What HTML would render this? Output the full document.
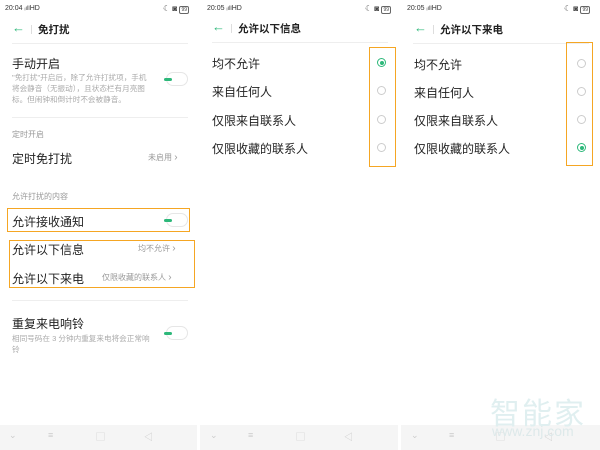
<!DOCTYPE html>
<html><head><meta charset="utf-8"><style>
*{margin:0;padding:0;box-sizing:border-box}
body{width:600px;height:450px;background:#fff;position:relative;overflow:hidden;font-family:"Liberation Sans","Noto Sans CJK SC",sans-serif;color:#222}
.a{position:absolute;white-space:nowrap}
.st{font-size:7px;color:#333;top:5px}
.ti{font-size:10.5px;font-weight:bold;color:#222}
.arr{font-size:13px;color:#2db87a;font-weight:bold}
.sep{width:1px;height:9px;background:#ddd}
.hl{height:1px;background:#eee}
.it{font-size:12px;color:#222}
.sm{font-size:8px;color:#999}
.ds{font-size:7.6px;color:#aaa;line-height:11px;white-space:normal}
.tg{width:22px;height:14px;border-radius:7px;border:1px solid #e6e6e6;background:#fff}
.tg:before{content:"";position:absolute;left:-3px;top:5px;width:8px;height:3px;border-radius:2px;background:#2db87a}
.rd{width:9px;height:9px;border-radius:50%;border:1px solid #ccc}
.rd.on{border-color:#2db87a}
.rd.on:after{content:"";position:absolute;left:1.5px;top:1.5px;width:4px;height:4px;border-radius:50%;background:#2db87a}
.ob{border:1.5px solid #f5a623}
.nav{top:425px;height:25px;background:#f5f5f5}
.ni{font-size:9px;color:#ccc;top:430px}
.ic{font-size:8px;color:#444;top:4px}
</style></head><body>
<!-- panel 1 -->
<div class="a st" style="left:5px">20:04 <span style="font-size:6px">ᵢıll</span>HD</div>
<div class="a ic" style="left:163px">☾ ◙ <span style="border:1px solid #666;border-radius:2px;font-size:5px;padding:0 1px">99</span></div>
<div class="a arr" style="left:12px;top:20px">←</div>
<div class="a sep" style="left:31px;top:25px"></div>
<div class="a ti" style="left:38px;top:22px">免打扰</div>
<div class="a hl" style="left:12px;top:43px;width:176px"></div>
<div class="a it" style="left:12px;top:55px">手动开启</div>
<div class="a ds" style="left:12px;top:72px;width:140px">"免打扰"开启后，除了允许打扰项，手机将会静音（无振动），且状态栏有月亮图标。但闹钟和倒计时不会被静音。</div>
<div class="a tg" style="left:166px;top:72px"></div>
<div class="a hl" style="left:12px;top:117px;width:176px"></div>
<div class="a sm" style="left:12px;top:129px">定时开启</div>
<div class="a it" style="left:12px;top:150px">定时免打扰</div>
<div class="a sm" style="left:148px;top:152px">未启用 <span style="font-size:10px">›</span></div>
<div class="a sm" style="left:12px;top:191px">允许打扰的内容</div>
<div class="a ob" style="left:7px;top:208px;width:183px;height:24px"></div>
<div class="a it" style="left:12px;top:213px">允许接收通知</div>
<div class="a tg" style="left:166px;top:213px"></div>
<div class="a ob" style="left:9px;top:240px;width:186px;height:48px"></div>
<div class="a it" style="left:12px;top:241px">允许以下信息</div>
<div class="a sm" style="left:138px;top:243px">均不允许 <span style="font-size:10px">›</span></div>
<div class="a it" style="left:12px;top:270px">允许以下来电</div>
<div class="a sm" style="left:102px;top:272px">仅限收藏的联系人 <span style="font-size:10px">›</span></div>
<div class="a hl" style="left:12px;top:300px;width:176px"></div>
<div class="a it" style="left:12px;top:315px">重复来电响铃</div>
<div class="a ds" style="left:12px;top:333px;width:145px">相同号码在 3 分钟内重复来电将会正常响铃</div>
<div class="a tg" style="left:166px;top:326px"></div>
<div class="a nav" style="left:0;width:197px"></div>
<div class="a ni" style="left:9px">⌄</div><div class="a ni" style="left:48px">≡</div><div class="a ni" style="left:96px">▢</div><div class="a ni" style="left:144px">◁</div>
<!-- panel 2 -->
<div class="a st" style="left:207px">20:05 <span style="font-size:6px">ᵢıll</span>HD</div>
<div class="a ic" style="left:365px">☾ ◙ <span style="border:1px solid #666;border-radius:2px;font-size:5px;padding:0 1px">99</span></div>
<div class="a arr" style="left:212px;top:19px">←</div>
<div class="a sep" style="left:231px;top:24px"></div>
<div class="a ti" style="left:238px;top:21px">允许以下信息</div>
<div class="a hl" style="left:212px;top:42px;width:176px"></div>
<div class="a it" style="left:212px;top:55px">均不允许</div>
<div class="a it" style="left:212px;top:83px">来自任何人</div>
<div class="a it" style="left:212px;top:112px">仅限来自联系人</div>
<div class="a it" style="left:212px;top:140px">仅限收藏的联系人</div>
<div class="a ob" style="left:369px;top:47px;width:27px;height:120px"></div>
<div class="a rd on" style="left:377px;top:58px"></div>
<div class="a rd" style="left:377px;top:86px"></div>
<div class="a rd" style="left:377px;top:115px"></div>
<div class="a rd" style="left:377px;top:143px"></div>
<div class="a nav" style="left:200px;width:198px"></div>
<div class="a ni" style="left:210px">⌄</div><div class="a ni" style="left:248px">≡</div><div class="a ni" style="left:296px">▢</div><div class="a ni" style="left:344px">◁</div>
<!-- panel 3 -->
<div class="a st" style="left:407px">20:05 <span style="font-size:6px">ᵢıll</span>HD</div>
<div class="a ic" style="left:564px">☾ ◙ <span style="border:1px solid #666;border-radius:2px;font-size:5px;padding:0 1px">99</span></div>
<div class="a arr" style="left:414px;top:20px">←</div>
<div class="a sep" style="left:433px;top:25px"></div>
<div class="a ti" style="left:440px;top:22px">允许以下来电</div>
<div class="a hl" style="left:413px;top:43px;width:176px"></div>
<div class="a it" style="left:414px;top:56px">均不允许</div>
<div class="a it" style="left:414px;top:84px">来自任何人</div>
<div class="a it" style="left:414px;top:112px">仅限来自联系人</div>
<div class="a it" style="left:414px;top:140px">仅限收藏的联系人</div>
<div class="a ob" style="left:566px;top:42px;width:27px;height:124px"></div>
<div class="a rd" style="left:577px;top:59px"></div>
<div class="a rd" style="left:577px;top:87px"></div>
<div class="a rd" style="left:577px;top:115px"></div>
<div class="a rd on" style="left:577px;top:143px"></div>
<div class="a nav" style="left:401px;width:199px"></div>
<div class="a ni" style="left:411px">⌄</div><div class="a ni" style="left:449px">≡</div><div class="a ni" style="left:496px">▢</div><div class="a ni" style="left:544px">◁</div>
<!-- watermark -->
<div class="a" style="left:490px;top:389px;font-size:30px;color:#e0eff0;letter-spacing:2px">智能家</div>
<div class="a" style="left:492px;top:423px;font-size:14px;color:#dde9ea">www.znj.com</div>
</body></html>
